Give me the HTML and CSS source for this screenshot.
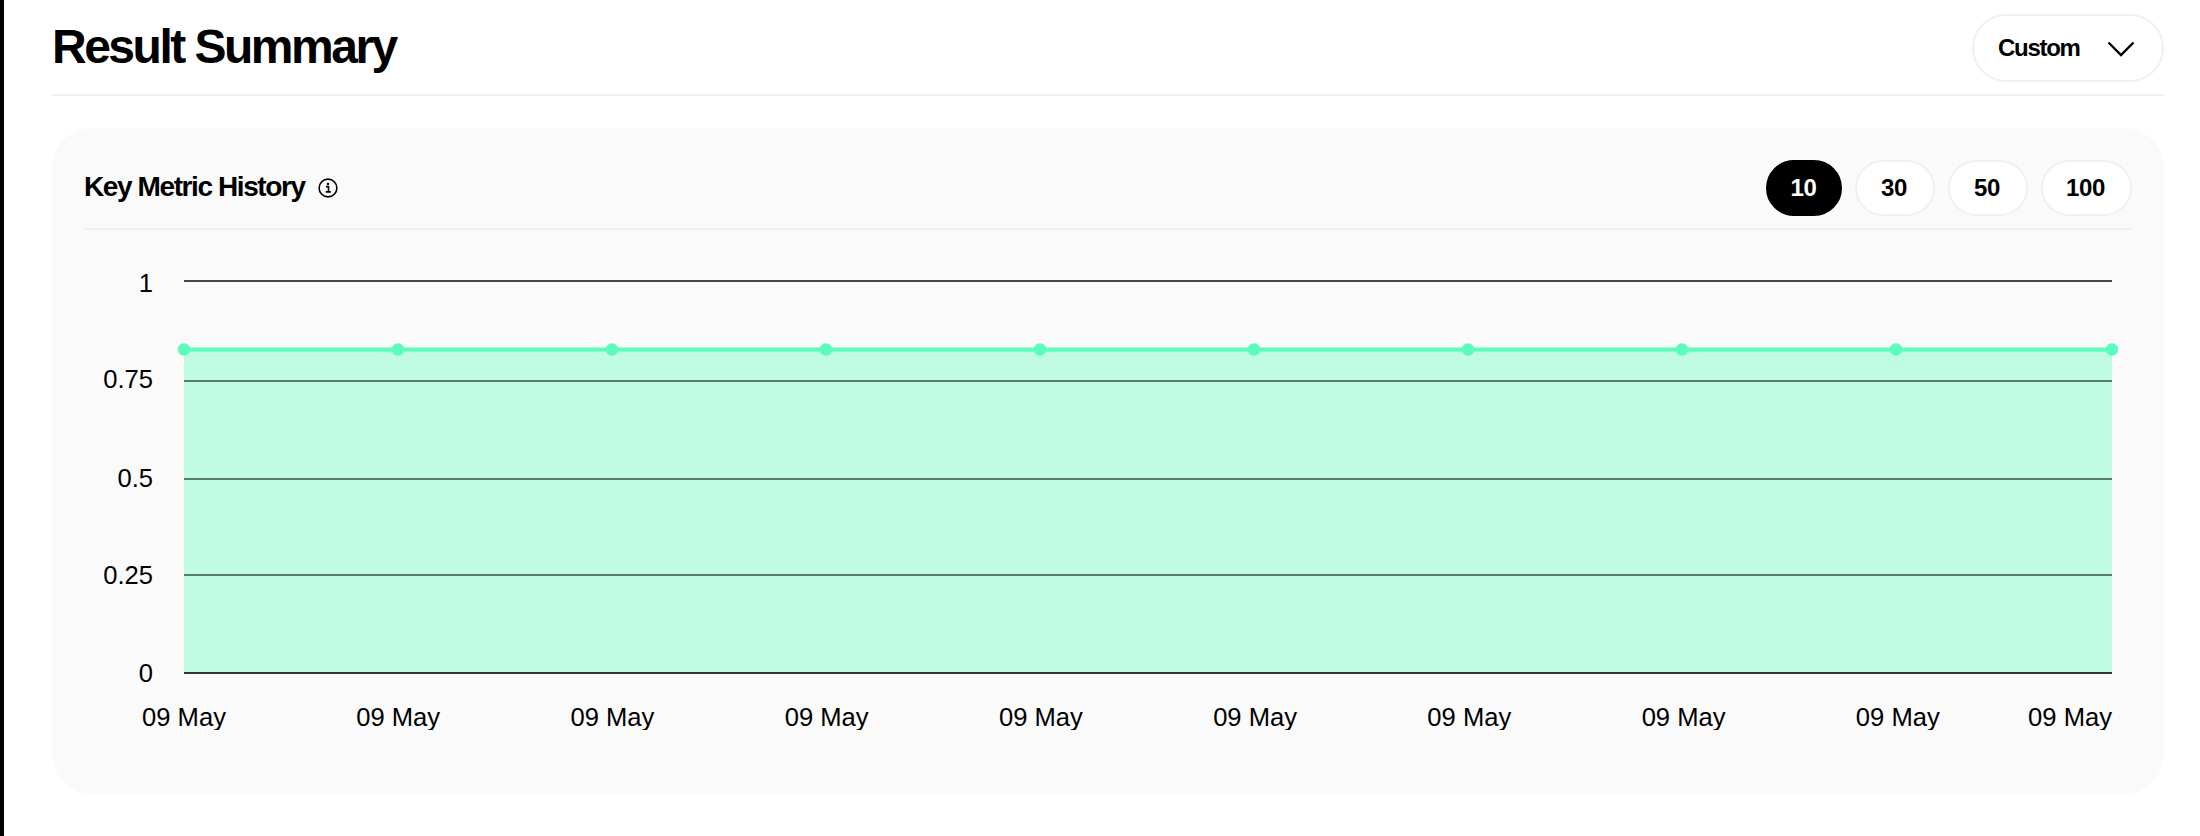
FILE: index.html
```html
<!DOCTYPE html>
<html lang="en">
<head>
<meta charset="utf-8">
<title>Result Summary</title>
<link rel="stylesheet" href="styles.css">
</head>
<body>
<main class="page">
  <header class="top">
    <h1 class="title">Result Summary</h1>
    <button class="select" type="button">
      <span>Custom</span>
      <svg class="chev" viewBox="0 0 28 16" width="28" height="16"><path d="M1.5 1.5 14 14 26.5 1.5" fill="none" stroke="#000" stroke-width="2.4"/></svg>
    </button>
  </header>
  <section class="card">
    <div class="card-head">
      <div class="card-title">
        <h2>Key Metric History</h2>
        <svg class="info" viewBox="0 0 20 20" width="20" height="20">
          <circle cx="10" cy="10" r="8.9" fill="none" stroke="#000" stroke-width="1.6"/>
          <path d="M8 8.6h2.5v5M7.8 13.9h5" fill="none" stroke="#000" stroke-width="1.6"/>
          <circle cx="10" cy="5.9" r="1.2" fill="#000"/>
        </svg>
      </div>
      <div class="pills">
        <span class="pill pill-on">10</span>
        <span class="pill pill-off">30</span>
        <span class="pill pill-off">50</span>
        <span class="pill pill-off pill-wide">100</span>
      </div>
    </div>
    <svg class="chart" viewBox="84 230 2048 500" width="2048" height="500">
      <rect class="area" x="184" y="349" width="1928" height="324"/>
      <line class="grid grid-top" x1="184" x2="2112" y1="281" y2="281"/>
      <line class="grid" x1="184" x2="2112" y1="381" y2="381"/>
      <line class="grid" x1="184" x2="2112" y1="479" y2="479"/>
      <line class="grid" x1="184" x2="2112" y1="575" y2="575"/>
      <line class="grid grid-base" x1="184" x2="2112" y1="673" y2="673"/>
      <line class="series" x1="184" x2="2112" y1="349.5" y2="349.5"/>
      <g class="dots">
        <circle cx="184" cy="349.5" r="6.2"/><circle cx="398" cy="349.5" r="6.2"/><circle cx="612" cy="349.5" r="6.2"/><circle cx="826" cy="349.5" r="6.2"/><circle cx="1040" cy="349.5" r="6.2"/><circle cx="1254" cy="349.5" r="6.2"/><circle cx="1468" cy="349.5" r="6.2"/><circle cx="1682" cy="349.5" r="6.2"/><circle cx="1896" cy="349.5" r="6.2"/><circle cx="2112" cy="349.5" r="6.2"/>
      </g>
      <g class="tick tick-y">
        <text x="153" y="292">1</text>
        <text x="153" y="388">0.75</text>
        <text x="153" y="487">0.5</text>
        <text x="153" y="584">0.25</text>
        <text x="153" y="682">0</text>
      </g>
      <g class="tick tick-x">
        <text x="184" y="726">09 May</text>
        <text x="398.2" y="726">09 May</text>
        <text x="612.4" y="726">09 May</text>
        <text x="826.7" y="726">09 May</text>
        <text x="1040.9" y="726">09 May</text>
        <text x="1255.1" y="726">09 May</text>
        <text x="1469.3" y="726">09 May</text>
        <text x="1683.6" y="726">09 May</text>
        <text x="1897.8" y="726">09 May</text>
        <text class="tick-end" x="2112" y="726">09 May</text>
      </g>
    </svg>
  </section>
</main>
</body>
</html>
```
FILE: styles.css
```css
* { box-sizing: border-box; }
html, body { margin: 0; height: 100%; background: #fff; }
body {
  border-left: 4px solid #000;
  font-family: "Liberation Sans", Arial, sans-serif;
  color: #000;
  overflow: hidden;
}
.page { padding: 14px 36px 0 48px; }
.top {
  display: flex;
  justify-content: space-between;
  align-items: center;
  height: 82px;
  padding-bottom: 12px;
  border-bottom: 2px solid #f0f0f0;
}
.title {
  margin: -2px 0 0;
  font-size: 48px;
  font-weight: 700;
  line-height: 68px;
  letter-spacing: -2.5px;
}
.select {
  display: flex;
  align-items: center;
  justify-content: space-between;
  width: 192px;
  height: 68px;
  padding: 0 27px 0 24px;
  background: #fff;
  border: 2px solid #f0f0f0;
  border-radius: 34px;
  font: 700 24px "Liberation Sans", Arial, sans-serif;
  letter-spacing: -1.3px;
  color: #000;
}
.chev { display: block; margin-top: 2px; }
.card {
  margin-top: 32px;
  height: 666px;
  padding: 32px 32px 0;
  background: #fafafa;
  border-radius: 40px;
}
.card-head {
  display: flex;
  justify-content: space-between;
  align-items: center;
  height: 70px;
  padding-bottom: 12px;
  border-bottom: 2px solid #f0f0f0;
}
.card-title { display: flex; align-items: center; gap: 13px; margin-top: -2px; }
.card-title h2 {
  margin: 0;
  font-size: 28px;
  font-weight: 700;
  letter-spacing: -1.4px;
}
.info { display: block; margin-top: 2px; }
.pills { display: flex; gap: 13px; }
.pill {
  display: flex;
  align-items: center;
  justify-content: center;
  width: 80px;
  height: 56px;
  background: #fff;
  border: 2px solid #f0f0f0;
  border-radius: 28px;
  font-size: 24px;
  font-weight: 700;
  letter-spacing: -0.3px;
}
.pill-off { padding-right: 2px; }
.pill-on { width: 76px; padding-right: 1px; background: #000; border-color: #000; color: #fff; }
.pill-wide { width: 91px; }
.chart { display: block; }
.area { fill: #c0fce3; }
.grid { stroke: #000; stroke-opacity: .52; stroke-width: 2; }
.grid-top { stroke-opacity: .72; }
.grid-base { stroke-opacity: .78; }
.series { stroke: #5bfabd; stroke-width: 4; }
.dots circle { fill: #5bfabd; }
.tick { font-size: 25.6px; fill: #000; }
.tick-y { text-anchor: end; }
.tick-x { text-anchor: middle; }
.tick-end { text-anchor: end; }
```
